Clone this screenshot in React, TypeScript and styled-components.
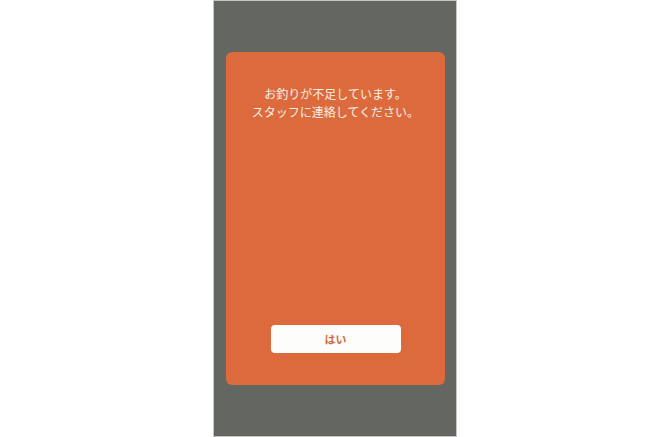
import styled, { createGlobalStyle } from "styled-components";

const GlobalStyle = createGlobalStyle`
  html, body {
    margin: 0;
    padding: 0;
    background: #ffffff;
  }
  body {
    font-family: "Noto Sans CJK JP", "Noto Sans", sans-serif;
  }
`;

const Page = styled.div`
  display: flex;
  justify-content: center;
  width: 670px;
  height: 437px;
`;

const Screen = styled.div`
  box-sizing: border-box;
  width: 244px;
  height: 437px;
  border: 1px solid #c4c4c4;
  background: #646662;
  padding: 51px 11px 0 12px;
`;

const Dialog = styled.div`
  box-sizing: border-box;
  display: flex;
  flex-direction: column;
  align-items: center;
  justify-content: space-between;
  width: 219px;
  height: 333px;
  background: #dc6a3d;
  border-radius: 6px;
  padding: 33px 0 32px;
`;

const Message = styled.p`
  margin: 0;
  color: #fbefe3;
  font-size: 12px;
  line-height: 18px;
  text-align: center;
`;

const Button = styled.button`
  width: 130px;
  height: 28px;
  border: none;
  border-radius: 4px;
  background: #fdfdfb;
  color: #d9683c;
  font-family: "Noto Sans CJK JP", sans-serif;
  font-size: 11px;
  font-weight: 700;
  padding: 0;
  cursor: pointer;
`;

export default function App() {
  return (
    <>
      <GlobalStyle />
      <Page>
        <Screen>
          <Dialog>
            <Message>
              お釣りが不足しています。
              <br />
              スタッフに連絡してください。
            </Message>
            <Button>はい</Button>
          </Dialog>
        </Screen>
      </Page>
    </>
  );
}
